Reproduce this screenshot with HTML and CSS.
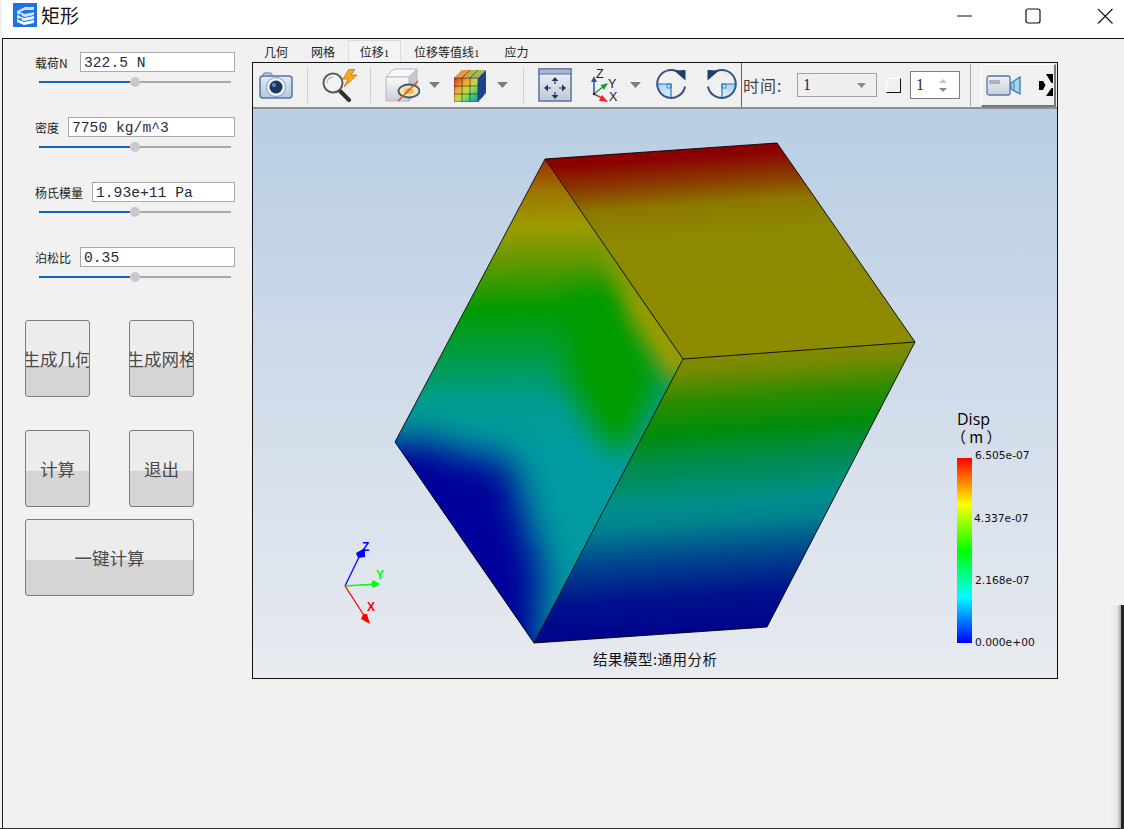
FILE: index.html
```html
<!DOCTYPE html>
<html lang="zh-CN">
<head>
<meta charset="utf-8">
<title>矩形</title>
<link rel="stylesheet" href="styles.css">
</head>
<body>
<div class="window">
  <header class="titlebar">
    <svg class="app-icon" viewBox="0 0 24 24">
      <rect width="24" height="24" fill="#1b73e8"/>
      <path d="M4 8 L12 4 L21 4 L21 7 L12 7 L7 9 L12 11 L21 9 L21 12 L12 14 L4 11Z" fill="#cfe2fb"/>
      <path d="M4 12 L11 15 L21 13 L21 16 L11 18 L4 15Z" fill="#e8f1fd"/>
      <path d="M4 16 L11 19 L21 17 L21 20 L11 22 L4 19Z" fill="#ffffff"/>
      <rect x="6.500" y="11" width="2" height="2" fill="#1b73e8"/>
      <rect x="6.500" y="15" width="2" height="2" fill="#1b73e8"/>
    </svg>
    <span class="app-title">矩形</span>
    <div class="win-controls">
      <svg class="win-btn win-min" viewBox="0 0 16 16"><path d="M0 8H15" stroke="#111" fill="none"/></svg>
      <svg class="win-btn win-max" viewBox="0 0 16 16"><rect x="1" y="1" width="14" height="14" rx="2" stroke="#111" stroke-width="1.200" fill="none"/></svg>
      <svg class="win-btn win-close" viewBox="0 0 16 16"><path d="M1 1L15.500 15.500M15.500 1L1 15.500" stroke="#111" stroke-width="1.100" fill="none"/></svg>
    </div>
  </header>

  <main class="content">
    <aside class="panel">
      <div class="field">
        <div class="field-row"><label class="field-label label-wide">载荷N</label><div class="field-input">322.5 N</div></div>
        <div class="slider"><span class="slider-fill"></span><span class="slider-thumb"></span><span class="slider-rest"></span></div>
      </div>
      <div class="field">
        <div class="field-row"><label class="field-label">密度</label><div class="field-input">7750 kg/m^3</div></div>
        <div class="slider"><span class="slider-fill"></span><span class="slider-thumb"></span><span class="slider-rest"></span></div>
      </div>
      <div class="field">
        <div class="field-row"><label class="field-label">杨氏模量</label><div class="field-input">1.93e+11 Pa</div></div>
        <div class="slider"><span class="slider-fill"></span><span class="slider-thumb"></span><span class="slider-rest"></span></div>
      </div>
      <div class="field">
        <div class="field-row"><label class="field-label">泊松比</label><div class="field-input">0.35</div></div>
        <div class="slider"><span class="slider-fill"></span><span class="slider-thumb"></span><span class="slider-rest"></span></div>
      </div>
      <div class="btn-grid">
        <button class="action action-low">生成几何</button>
        <button class="action action-low">生成网格</button>
        <button class="action action-mid">计算</button>
        <button class="action action-mid">退出</button>
        <button class="action action-mid action-wide">一键计算</button>
      </div>
    </aside>

    <section class="work">
      <nav class="tabs">
        <span class="tab tab-a">几何</span>
        <span class="tab tab-b">网格</span>
        <span class="tab tab-active">位移<span class="tab-num">1</span></span>
        <span class="tab tab-c">位移等值线<span class="tab-num">1</span></span>
        <span class="tab tab-d">应力</span>
      </nav>
      <div class="viewer">
        <div class="toolbar">
          <svg class="tool t-camera" viewBox="0 0 34 28">
            <defs><linearGradient id="camBody" x1="0" y1="0" x2="0" y2="1"><stop offset="0" stop-color="#e2ebf6"/><stop offset="1" stop-color="#b4c8e1"/></linearGradient></defs>
            <path d="M4 5V3.500Q4 2 6 2H11Q13 2 13 3.500V5" fill="#c5d4e8" stroke="#54769f"/>
            <rect x="1" y="5" width="32" height="22" rx="3" fill="url(#camBody)" stroke="#54769f" stroke-width="1.500"/>
            <circle cx="17" cy="16" r="9.500" fill="#eef4fa" stroke="#7f9dc2"/>
            <circle cx="17" cy="16" r="6.500" fill="#1b3568"/>
            <circle cx="15" cy="14" r="2" fill="#6f88b2"/>
          </svg>
          <span class="sep sep-a"></span>
          <svg class="tool t-mag" viewBox="0 0 35 33">
            <path d="M17 21L27 31" stroke="#2f2f2f" stroke-width="4" stroke-linecap="round"/>
            <circle cx="11" cy="14" r="9.500" fill="#f3f3f3" stroke="#5b5b5b" stroke-width="2"/>
            <path d="M5 14A6 6 0 0 1 11 8" stroke="#bdbdbd" stroke-width="1.500" fill="none"/>
            <path d="M27 0L21 10H26L22 18L35 6H29L33 0Z" fill="#f6a821" stroke="#c96f06" stroke-width=".8"/>
          </svg>
          <span class="sep sep-b"></span>
          <svg class="tool t-box" viewBox="0 0 35 34">
            <defs><linearGradient id="boxF" x1="0" y1="0" x2="0" y2="1"><stop offset="0" stop-color="#fafafa"/><stop offset="1" stop-color="#c9ced6"/></linearGradient></defs>
            <path d="M1 9L9 1H32L24 9Z" fill="#f7f7f7" stroke="#b4bac4"/>
            <path d="M24 9L32 1V24L24 33Z" fill="#c2c7d0" stroke="#b4bac4"/>
            <rect x="1" y="9" width="23" height="24" fill="url(#boxF)" stroke="#b4bac4"/>
            <ellipse cx="24" cy="23" rx="10.500" ry="6.500" fill="#f6e3a8" stroke="#3b5a80" stroke-width="1.800"/>
            <ellipse cx="24" cy="23" rx="5" ry="3" fill="#e9b45f"/>
            <path d="M13 33L33 13" stroke="#d4522a" stroke-width="1.500"/>
          </svg>
          <svg class="tool t-arrow m-a1" viewBox="0 0 11 6"><path d="M0 0H11L5.500 6Z" fill="#7d7d7d"/></svg>
          <svg class="tool t-ccube" viewBox="0 0 33 33">
            <defs>
              <linearGradient id="ccF" x1="0" y1="0" x2="1" y2="1"><stop offset="0" stop-color="#e0261e"/><stop offset=".35" stop-color="#f2b22c"/><stop offset=".55" stop-color="#b8e040"/><stop offset=".8" stop-color="#32c878"/><stop offset="1" stop-color="#1f7fe4"/></linearGradient>
            </defs>
            <path d="M0 9L8 1H32L24 9Z" fill="#a9b85c"/>
            <path d="M8 1H18L10 9H0Z" fill="#e59a4a"/>
            <path d="M24 9L32 1V24L24 33Z" fill="#1c4797"/>
            <rect x="0" y="9" width="24" height="24" fill="url(#ccF)"/>
            <path d="M0 17H24M0 25H24M8 9V33M16 9V33M0 9V33H24V9H0M28 5V29M24 17L32 9M24 25L32 17M8 9L16 1M16 9L24 1" stroke="#25344f" stroke-width=".7" fill="none"/>
          </svg>
          <svg class="tool t-arrow m-a2" viewBox="0 0 11 6"><path d="M0 0H11L5.500 6Z" fill="#7d7d7d"/></svg>
          <span class="sep sep-c"></span>
          <svg class="tool t-pan" viewBox="0 0 34 34">
            <defs><linearGradient id="panF" x1="0" y1="0" x2="0" y2="1"><stop offset="0" stop-color="#f1f3f8"/><stop offset="1" stop-color="#c3c8d7"/></linearGradient></defs>
            <rect x="1" y="1" width="32" height="32" fill="url(#panF)" stroke="#5a7199" stroke-width="1.500"/>
            <rect x="1" y="1" width="32" height="5" fill="#a7b7cf" stroke="#5a7199"/>
            <path d="M17 11V29M8 20H26" stroke="#1f3a66" stroke-width="1.200" stroke-dasharray="5 8 5"/>
            <path d="M17 9L20.500 13H13.500ZM17 31L20.500 27H13.500ZM6 20L10 16.500V23.500ZM28 20L24 16.500V23.500Z" fill="#1f3a66"/>
          </svg>
          <svg class="tool t-axes" viewBox="0 0 32 35">
            <path d="M3 26V12" stroke="#2456a8" stroke-width="1.500"/>
            <path d="M3 8L6 14H0Z" fill="#2456a8"/>
            <path d="M3 26L13 18" stroke="#1d9a3d" stroke-width="1.500"/>
            <path d="M17 15L13 22L9.500 17Z" fill="#1d9a3d"/>
            <path d="M3 26L13 31" stroke="#e5262a" stroke-width="1.500"/>
            <path d="M17 34L8 33L11 27Z" fill="#e5262a"/>
            <circle cx="3" cy="26" r="1.200" fill="#222"/>
            <text class="axis-letter" x="5" y="10">Z</text>
            <text class="axis-letter" x="17" y="20">Y</text>
            <text class="axis-letter" x="18" y="33">X</text>
          </svg>
          <svg class="tool t-arrow m-a3" viewBox="0 0 11 6"><path d="M0 0H11L5.500 6Z" fill="#7d7d7d"/></svg>
          <svg class="tool t-rot" viewBox="0 0 32 32">
            <defs><linearGradient id="rotQ" x1="0" y1="0" x2="1" y2="1"><stop offset="0" stop-color="#9fd0f3"/><stop offset="1" stop-color="#e6f3fc"/></linearGradient></defs>
            <path d="M1.500 15H15V29A14 14 0 0 1 1.500 15Z" fill="url(#rotQ)"/>
            <path d="M1 15H15V29" stroke="#2477c0" stroke-width="1.200" fill="none"/>
            <rect x="11" y="15" width="4" height="4" fill="none" stroke="#2477c0" stroke-width=".8"/>
            <path d="M22.500 3A14 14 0 1 0 29 17.500" stroke="#36587f" stroke-width="2" fill="none"/>
            <path d="M18 1.500L29.500 1V11.500Z" fill="#1e3e6e"/>
          </svg>
          <svg class="tool t-rot t-rot-mirror" viewBox="0 0 32 32">
            <path d="M1.500 15H15V29A14 14 0 0 1 1.500 15Z" fill="url(#rotQ)"/>
            <path d="M1 15H15V29" stroke="#2477c0" stroke-width="1.200" fill="none"/>
            <rect x="11" y="15" width="4" height="4" fill="none" stroke="#2477c0" stroke-width=".8"/>
            <path d="M22.500 3A14 14 0 1 0 29 17.500" stroke="#36587f" stroke-width="2" fill="none"/>
            <path d="M18 1.500L29.500 1V11.500Z" fill="#1e3e6e"/>
          </svg>
          <span class="sep sep-dark"></span>
          <span class="time-label">时间:</span>
          <div class="combo"><span class="ctl-val">1</span><svg class="combo-arrow" viewBox="0 0 9 5"><path d="M0 0H9L4.500 5Z" fill="#8a8a8a"/></svg></div>
          <span class="check"></span>
          <div class="spin"><span class="ctl-val">1</span>
            <span class="spin-arrows">
              <svg class="spin-arrow" viewBox="0 0 8 4"><path d="M4 0L8 4H0Z" fill="#c4c4c4"/></svg>
              <svg class="spin-arrow" viewBox="0 0 8 4"><path d="M0 0H8L4 4Z" fill="#888"/></svg>
            </span>
          </div>
          <span class="sep sep-d"></span>
          <div class="video-btn">
            <svg class="video-icon" viewBox="0 0 36 21">
              <defs><linearGradient id="vidB" x1="0" y1="0" x2="0" y2="1"><stop offset="0" stop-color="#eef1f6"/><stop offset="1" stop-color="#c8d0dc"/></linearGradient></defs>
              <rect x="1" y="1" width="23" height="19" rx="2" fill="url(#vidB)" stroke="#56779f" stroke-width="1.300"/>
              <rect x="3" y="5" width="11" height="4" fill="#aeb4bd"/>
              <path d="M25 8L34 2V19L25 14Z" fill="#a9d6ef" stroke="#3f79b3" stroke-width="1.300"/>
              <path d="M28 7V15" stroke="#3f79b3"/>
            </svg>
            <svg class="more-icon" viewBox="0 0 14 22">
              <defs><filter id="moreBlur" x="-20%" y="-20%" width="140%" height="140%"><feGaussianBlur stdDeviation=".7"/></filter></defs>
              <rect width="14" height="22" fill="#f2f2f2"/>
              <path d="M0 7L4 7L6.500 11L4 16H0Z" fill="#000" filter="url(#moreBlur)"/>
              <path d="M7 0H14V9H12.500Z" fill="#000" filter="url(#moreBlur)"/>
              <path d="M7 22H14V14H12.500Z" fill="#000" filter="url(#moreBlur)"/>
            </svg>
          </div>
        </div>

        <div class="view">
          <svg class="scene" viewBox="253 109 804 569">
            <defs>
              <linearGradient id="topFace" gradientUnits="userSpaceOnUse" x1="660" y1="150" x2="675" y2="360">
                <stop offset=".04" stop-color="#8b0000"/>
                <stop offset=".17" stop-color="#8a4000"/>
                <stop offset=".27" stop-color="#8c7800"/>
                <stop offset=".42" stop-color="#8c8a00"/>
                <stop offset="1" stop-color="#8c8c00"/>
              </linearGradient>
              <linearGradient id="rightFace" gradientUnits="userSpaceOnUse" x1="725" y1="352" x2="745" y2="640">
                <stop offset="0" stop-color="#8c8a00"/>
                <stop offset=".07" stop-color="#6f8a00"/>
                <stop offset=".16" stop-color="#2c8c00"/>
                <stop offset=".27" stop-color="#008c0c"/>
                <stop offset=".37" stop-color="#008c48"/>
                <stop offset=".52" stop-color="#008f8c"/>
                <stop offset=".59" stop-color="#00808e"/>
                <stop offset=".70" stop-color="#00488e"/>
                <stop offset=".84" stop-color="#00108c"/>
                <stop offset="1" stop-color="#00008c"/>
              </linearGradient>
              <linearGradient id="leftFace" gradientUnits="userSpaceOnUse" x1="520" y1="159" x2="530" y2="643">
                <stop offset="0" stop-color="#a02c00"/>
                <stop offset=".07" stop-color="#9c7800"/>
                <stop offset=".14" stop-color="#9c9c00"/>
                <stop offset=".22" stop-color="#5c9800"/>
                <stop offset=".31" stop-color="#009c00"/>
                <stop offset=".40" stop-color="#009c40"/>
                <stop offset=".50" stop-color="#009c90"/>
                <stop offset=".60" stop-color="#009ca0"/>
                <stop offset="1" stop-color="#009aa0"/>
              </linearGradient>
              <clipPath id="leftClip"><polygon points="545,159 683,359 534,643 395,442"/></clipPath>
              <filter id="blurXL" x="-40%" y="-40%" width="180%" height="180%"><feGaussianBlur stdDeviation="18"/></filter>
              <filter id="blurL" x="-40%" y="-40%" width="180%" height="180%"><feGaussianBlur stdDeviation="14"/></filter>
              <filter id="blurM" x="-30%" y="-30%" width="160%" height="160%"><feGaussianBlur stdDeviation="10"/></filter>
              <linearGradient id="legend" x1="0" y1="0" x2="0" y2="1">
                <stop offset="0" stop-color="#ff0000"/>
                <stop offset=".25" stop-color="#ffff00"/>
                <stop offset=".5" stop-color="#00ff00"/>
                <stop offset=".75" stop-color="#00ffff"/>
                <stop offset="1" stop-color="#0000ff"/>
              </linearGradient>
            </defs>

            <polygon points="545,159 777,143 915,342 683,359" fill="url(#topFace)"/>
            <polygon points="683,359 915,342 767,627 534,643" fill="url(#rightFace)"/>
            <g clip-path="url(#leftClip)">
              <polygon points="545,159 683,359 534,643 395,442" fill="url(#leftFace)"/>
              <path d="M570 285L640 300L660 385L625 455L600 440L565 380Z" fill="#009c00" filter="url(#blurL)"/>
              <path d="M600 230L705 360L672 385L630 320Z" fill="#9c9c00" filter="url(#blurM)"/>
              <path d="M370 445L420 440L470 455L510 460L525 520L542 570L535 670L500 670Z" fill="#00009a" filter="url(#blurXL)"/>
              <path d="M385 445L450 490L535 660L470 620Z" fill="#00009a" filter="url(#blurM)"/>
            </g>
            <path d="M545 159L777 143L915 342L767 627L534 643L395 442Z M545 159L683 359L915 342 M683 359L534 643" fill="none" stroke="#000" stroke-width=".9"/>

            <g>
              <path d="M345 586L361 553" stroke="#0000ff" stroke-width="1.300"/>
              <path d="M345 586L376 584" stroke="#00ff00" stroke-width="1.300"/>
              <path d="M345 586L367 620" stroke="#ff0000" stroke-width="1.300"/>
              <path d="M365 548L365 557L358 558L356 553Z" fill="#0000ff"/>
              <path d="M380 584L373 588L371 584L373 580Z" fill="#00ff00"/>
              <path d="M370 624L361 619L363 614L367 614Z" fill="#ff0000"/>
              <text class="triad triad-z" x="362" y="551">Z</text>
              <text class="triad triad-y" x="376" y="579">Y</text>
              <text class="triad triad-x" x="367" y="611">X</text>
            </g>

            <text class="legend-title" x="957" y="425">Disp</text>
            <text class="legend-unit" x="951" y="443">（ m ）</text>
            <rect x="957" y="458" width="15" height="185" fill="url(#legend)"/>
            <text class="legend-label" x="975" y="459">6.505e-07</text>
            <text class="legend-label" x="974" y="522">4.337e-07</text>
            <text class="legend-label" x="975" y="584">2.168e-07</text>
            <text class="legend-label" x="975" y="646">0.000e+00</text>
            <text class="caption" x="593" y="665">结果模型:通用分析</text>
          </svg>
        </div>
      </div>
    </section>
  </main>
  <div class="edge-shadow"></div>
</div>
</body>
</html>
```

FILE: styles.css
```css
* { box-sizing: border-box; }

html, body {
  margin: 0;
  padding: 0;
  width: 1124px;
  height: 829px;
  overflow: hidden;
  background: #f0f0f0;
  font-family: "Noto Sans CJK SC", "Liberation Sans", sans-serif;
}

.window {
  position: relative;
  width: 1124px;
  height: 829px;
  padding-left: 2px;
  display: flex;
  flex-direction: column;
  background: #f1f1f1;
  border-bottom: 1px solid #333;
}

/* Title bar */
.titlebar {
  height: 39px;
  flex: none;
  display: flex;
  align-items: flex-start;
  background: #fff;
  border-bottom: 1px solid #111;
  padding-left: 11px;
  padding-top: 3px;
}
.app-icon { width: 24px; height: 24px; flex: none; }
.app-title {
  margin-left: 4px;
  font-size: 19px;
  line-height: 24px;
  color: #111;
}
.win-controls {
  margin-left: auto;
  display: flex;
  align-items: center;
  padding-top: 5px;
  padding-right: 11px;
}
.win-btn { width: 16px; height: 16px; display: block; }
.win-max { margin-left: 52px; }
.win-close { margin-left: 56px; }

/* Main area */
.content {
  flex: 1;
  display: flex;
  border-left: 1px solid #222;
  min-height: 0;
}

.panel {
  width: 249px;
  flex: none;
  padding: 13px 0 0 22px;
}
.field {
  height: 65px;
  margin-left: 10px;
  width: 200px;
}
.field-row {
  display: flex;
  align-items: center;
  gap: 9px;
  height: 20px;
}
.field-label {
  font-size: 12px;
  color: #222;
  white-space: nowrap;
}
.label-wide { width: 36px; }
.field-input {
  flex: 1;
  height: 20px;
  background: #fff;
  border: 1px solid #aaa;
  padding-left: 3px;
  font-family: "Liberation Mono", monospace;
  font-size: 14.670px;
  line-height: 20px;
  color: #2a2a3a;
  white-space: nowrap;
}
.slider {
  display: flex;
  align-items: center;
  width: 192px;
  height: 11px;
  margin: 4px 0 0 4px;
}
.slider-fill { width: 91px; height: 2px; background: #0f67b5; }
.slider-thumb { width: 10px; height: 10px; border-radius: 50%; background: #c9c9c9; flex: none; }
.slider-rest { flex: 1; height: 2px; background: #a9a9a9; }

.btn-grid {
  margin-top: 8px;
  display: grid;
  grid-template-columns: 65px 65px;
  grid-template-rows: 77px 77px 77px;
  column-gap: 39px;
  row-gap: 33px;
}
.action {
  display: flex;
  align-items: center;
  justify-content: center;
  overflow: hidden;
  padding: 0;
  white-space: nowrap;
  border: 1px solid #7c7c7c;
  border-radius: 3px;
  font-family: "Noto Sans CJK SC", sans-serif;
  font-size: 17.500px;
  font-weight: 400;
  color: #4a4a4a;
}
.action-low { background: linear-gradient(#ececec 0 59%, #d5d5d5 60%); }
.action-mid { background: linear-gradient(#ececec 0 51%, #f2f2f2 52%, #d5d5d5 54%); }
.action-wide {
  grid-column: 1 / 3;
  align-self: start;
  height: 77px;
  margin-top: -21px;
}

/* Work area */
.work {
  flex: none;
  width: 806px;
}
.tabs {
  height: 23px;
  padding-top: 1px;
  display: flex;
  font-size: 12px;
  color: #222;
}
.tab { line-height: 24px; }
.tab-a { margin-left: 12px; }
.tab-b { margin-left: 23px; }
.tab-active {
  margin-left: 13px;
  width: 53px;
  text-align: center;
  background: #f4f4f4;
  border: 1px solid #dcdcdc;
  border-bottom: none;
  line-height: 21px;
}
.tab-c { margin-left: 13px; }
.tab-d { margin-left: 25px; }
.tab-num { font-family: "Liberation Serif", serif; font-size: 11px; }

.viewer {
  width: 806px;
  height: 617px;
  border: 1px solid #111;
  display: flex;
  flex-direction: column;
}

.toolbar {
  height: 46px;
  flex: none;
  display: flex;
  align-items: center;
  padding-left: 6px;
  border-bottom: 2px solid #8e8e8e;
  background: #f0f0f0;
}
.tool { display: block; flex: none; }
.t-camera { width: 34px; height: 28px; }
.t-mag { width: 35px; height: 33px; margin-left: 14px; }
.t-box { width: 35px; height: 34px; margin-left: 14px; }
.t-arrow { width: 11px; height: 6px; }
.m-a1 { margin-left: 9px; }
.t-ccube { width: 33px; height: 33px; margin-left: 14px; }
.m-a2 { margin-left: 10px; }
.t-pan { width: 34px; height: 34px; margin-left: 14px; }
.t-axes { width: 32px; height: 35px; margin-left: 19px; }
.m-a3 { margin-left: 7px; }
.t-rot { width: 32px; height: 32px; margin-left: 15px; }
.t-rot-mirror { margin-left: 17px; transform: scaleX(-1); }
.axis-letter {
  font-family: "Liberation Sans", sans-serif;
  font-size: 12.500px;
  fill: #222;
}

.sep { width: 1px; height: 36px; background: #cfcfcf; flex: none; }
.sep-a { margin-left: 14px; }
.sep-b { margin-left: 13px; }
.sep-c { margin-left: 15px; }
.sep-d { margin-left: 10px; height: 42px; background: #a8a8a8; }
.sep-dark { margin-left: 4px; height: 44px; background: #666; }

.time-label {
  margin-left: 1px;
  width: 54px;
  flex: none;
  font-size: 16px;
  letter-spacing: 1px;
  color: #444;
  white-space: nowrap;
}
.combo {
  width: 80px;
  height: 24px;
  flex: none;
  display: flex;
  align-items: center;
  justify-content: space-between;
  padding: 0 10px 0 5px;
  border: 1px solid #a0a0a0;
  background: #efefef;
}
.ctl-val {
  font-family: "Liberation Serif", serif;
  font-size: 16px;
  color: #2a2a3a;
}
.combo-arrow { width: 9px; height: 5px; }
.check {
  width: 15px;
  height: 15px;
  margin-left: 9px;
  flex: none;
  border: 1px solid;
  border-color: #fff #111 #111 #fff;
}
.spin {
  width: 50px;
  height: 28px;
  margin-left: 9px;
  flex: none;
  display: flex;
  align-items: center;
  justify-content: space-between;
  padding: 0 12px 0 5px;
  background: #fff;
  border: 1px solid #7e7e7e;
}
.spin-arrows { display: flex; flex-direction: column; gap: 5px; }
.spin-arrow { width: 8px; height: 4px; display: block; }

.video-btn {
  width: 75px;
  height: 43px;
  margin-left: 10px;
  margin-top: 1px;
  flex: none;
  display: flex;
  align-items: center;
  padding-left: 4px;
  background: #f0f0f0;
  border-style: solid;
  border-width: 1px 2px 2px 1px;
  border-color: #fff #777 #777 #fff;
}
.video-icon { width: 36px; height: 21px; flex: none; }
.more-icon { width: 14px; height: 22px; margin-left: 17px; flex: none; }

.view {
  flex: 1;
  min-height: 0;
  background: linear-gradient(#b9cde4, #e8ebf0);
}
.scene { display: block; width: 804px; height: 569px; }

.triad { font-family: "Liberation Sans", sans-serif; font-weight: 700; font-size: 12px; }
.triad-z { fill: #0000ff; }
.triad-y { fill: #00ff00; }
.triad-x { fill: #ff0000; }

.legend-title { font-family: "Open Sans", sans-serif; font-size: 16px; fill: #000; }
.legend-unit { font-family: "Noto Sans CJK SC", sans-serif; font-size: 15px; fill: #000; }
.legend-label {
  font-family: "DejaVu Sans", sans-serif;
  font-size: 10.700px;
  fill: #111;
}
.caption { font-family: "Noto Sans CJK SC", sans-serif; font-size: 14.500px; letter-spacing: .5px; fill: #111; }

/* Neighbouring window peeking in at the lower right corner */
.edge-shadow {
  position: absolute;
  right: 0;
  top: 605px;
  bottom: 0;
  width: 14px;
  border-top-left-radius: 4px;
  background: linear-gradient(90deg, rgba(0,0,0,0) 0, rgba(0,0,0,.04) 50%, rgba(0,0,0,.28) 76%, #222 78%, #222 100%);
}
```
